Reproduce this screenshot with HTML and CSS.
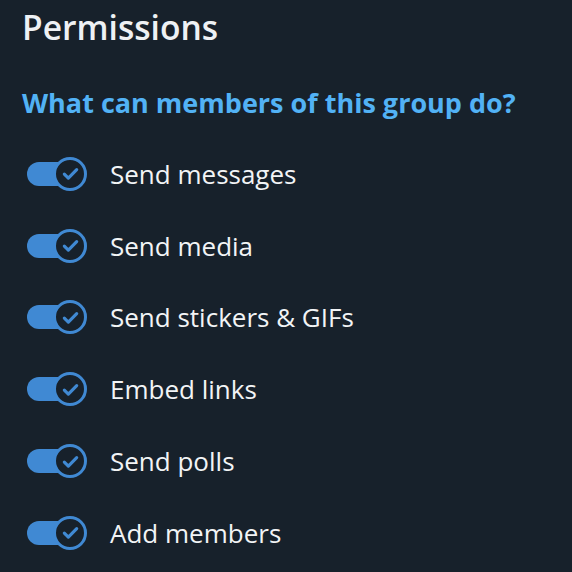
FILE: index.html
```html
<!DOCTYPE html>
<html>
<head>
<meta charset="utf-8">
<link rel="stylesheet" href="styles.css">
</head>
<body>
<div class="panel">
  <h1 class="title">Permissions</h1>
  <h2 class="subtitle">What can members of this group do?</h2>
  <ul class="list">
    <li class="row"><span class="toggle"><span class="knob"><svg viewBox="0 0 24 24"><path d="M6.5 12.5l3.6 3.6 7.4-7.6"/></svg></span></span><span class="label">Send messages</span></li>
    <li class="row"><span class="toggle"><span class="knob"><svg viewBox="0 0 24 24"><path d="M6.5 12.5l3.6 3.6 7.4-7.6"/></svg></span></span><span class="label">Send media</span></li>
    <li class="row"><span class="toggle"><span class="knob"><svg viewBox="0 0 24 24"><path d="M6.5 12.5l3.6 3.6 7.4-7.6"/></svg></span></span><span class="label">Send stickers &amp; GIFs</span></li>
    <li class="row"><span class="toggle"><span class="knob"><svg viewBox="0 0 24 24"><path d="M6.5 12.5l3.6 3.6 7.4-7.6"/></svg></span></span><span class="label">Embed links</span></li>
    <li class="row"><span class="toggle"><span class="knob"><svg viewBox="0 0 24 24"><path d="M6.5 12.5l3.6 3.6 7.4-7.6"/></svg></span></span><span class="label">Send polls</span></li>
    <li class="row"><span class="toggle"><span class="knob"><svg viewBox="0 0 24 24"><path d="M6.5 12.5l3.6 3.6 7.4-7.6"/></svg></span></span><span class="label">Add members</span></li>
  </ul>
</div>
</body>
</html>
```
FILE: styles.css
```css
html, body {
  margin: 0;
  padding: 0;
  background: #17212b;
}
body {
  font-family: "Open Sans", "Noto Sans", sans-serif;
  width: 572px;
  height: 572px;
  overflow: hidden;
}
.panel {
  padding: 7px 0 0 22px;
}
.title {
  margin: 0;
  font-size: 33.6px;
  font-weight: 600;
  color: #eef1f4;
  line-height: 40px;
}
.subtitle {
  margin: 40px 0 0 0;
  font-size: 27px;
  font-weight: 700;
  color: #52b2f5;
  line-height: 32px;
}
.list {
  list-style: none;
  margin: 19px 0 0 0;
  padding: 0;
}
.row {
  display: flex;
  align-items: center;
  height: 71.8px;
}
.toggle {
  position: relative;
  display: block;
  width: 46px;
  height: 24px;
  margin-left: 5px;
  border-radius: 12px;
  background: #4089d3;
}
.knob {
  position: absolute;
  right: -14px;
  top: -5px;
  width: 28px;
  height: 28px;
  border: 3px solid #4089d3;
  border-radius: 50%;
  background: #17212b;
  display: flex;
  align-items: center;
  justify-content: center;
}
.knob svg {
  width: 27px;
  height: 27px;
  fill: none;
  stroke: #4089d3;
  stroke-width: 2.8;
  stroke-linecap: round;
  stroke-linejoin: round;
}
.label {
  margin-left: 37px;
  font-size: 26px;
  color: #f2f4f6;
}
```
